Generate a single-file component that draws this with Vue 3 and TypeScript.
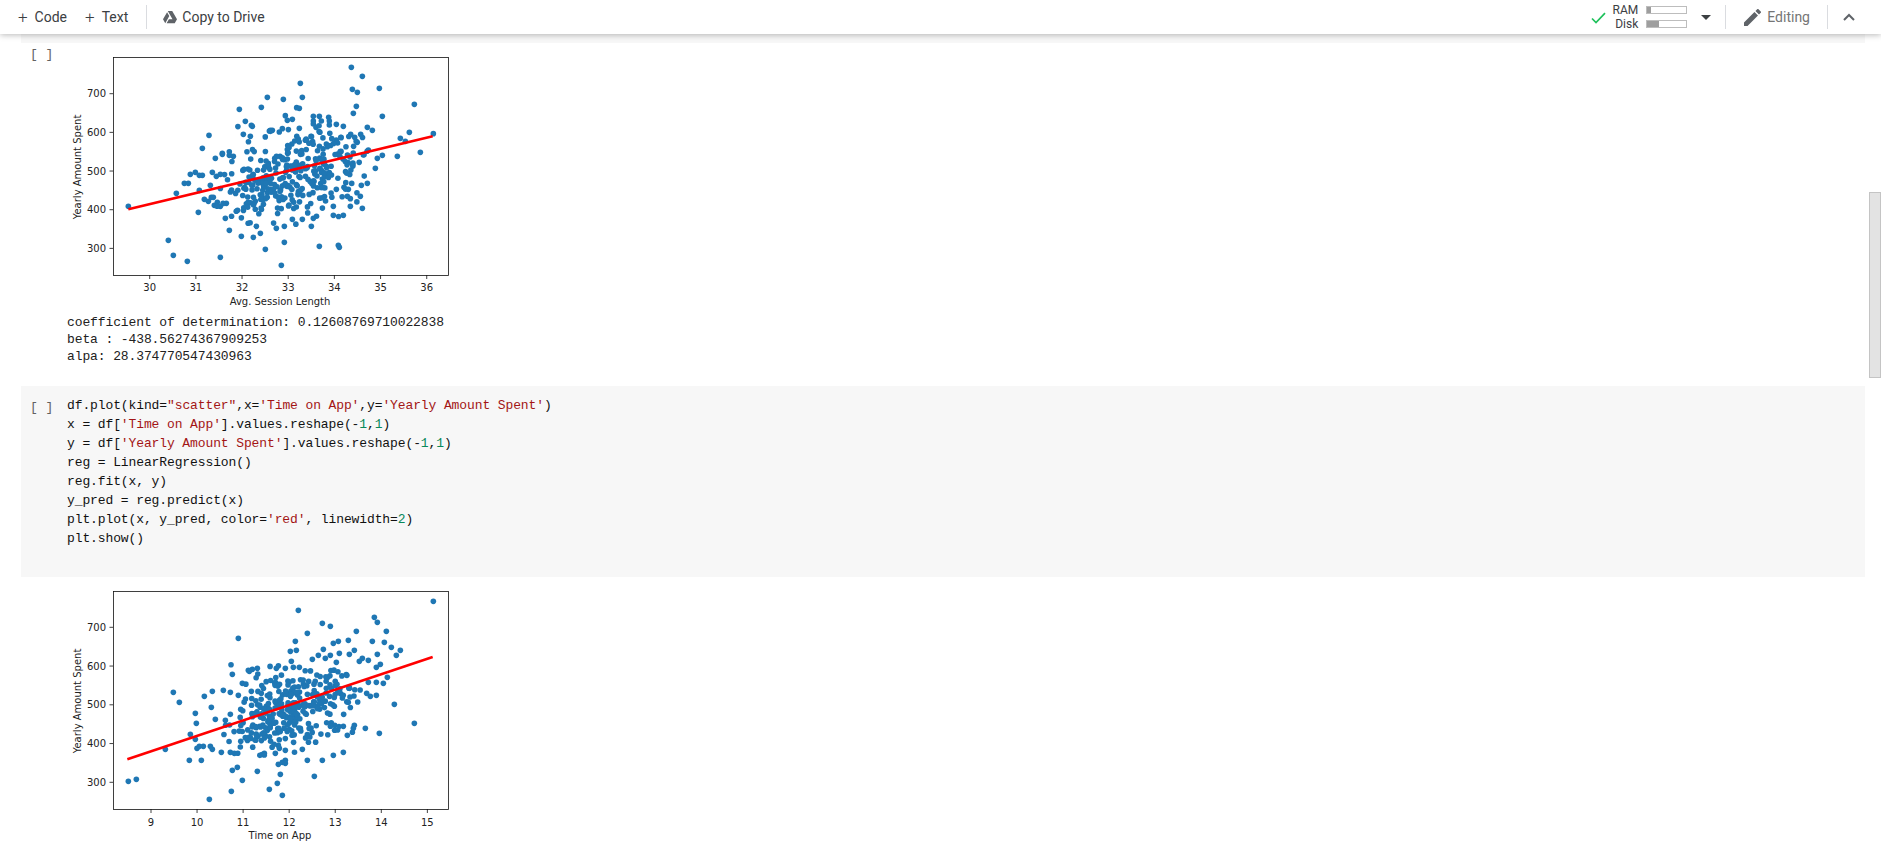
<script setup lang="ts">
type Point = [number, number];

interface Plot {
  xLabel: string;
  xLabelY: number;
  yLabelY: number;
  tickLabelY: number;
  box: [number, number, number, number];
  xTicks: { at: number; label: string }[];
  yTicks: { at: number; label: string }[];
  line: [number, number, number, number];
  points: Point[];
  top: number;
  height: number;
}

// seeded so the dense middle of each cloud stays the same between runs
const scatterFill = (seed: number, count: number, cx: number, cy: number, sx: number, sy: number, slope: number): Point[] => {
  let s = seed;
  const rand = () => {
    s = (s + 0x6d2b79f5) | 0;
    let t = Math.imul(s ^ (s >>> 15), 1 | s);
    t = (t + Math.imul(t ^ (t >>> 7), 61 | t)) ^ t;
    return ((t ^ (t >>> 14)) >>> 0) / 4294967296;
  };
  const gauss = () => Math.sqrt(-2 * Math.log(rand() + 1e-9)) * Math.cos(2 * Math.PI * rand());
  const out: Point[] = [];
  while (out.length < count) {
    const dx = gauss() * sx;
    const dy = gauss() * sy - dx * slope;
    if (Math.abs(dx) < sx * 2 && Math.abs(dy) < sy * 2.2) out.push([cx + dx, cy + dy]);
  }
  return out;
};

const session: Point[] = [
  [904,82],[937,109],[907,148],[922,157],[751,130],[988,145],[652,172],[700,178],[757,172],[919,199],[634,202],[568,208],
  [740,203],[748,205],[910,220],[706,227],[712,241],[727,238],[790,229],[808,229],[836,232],[838,243],[838,255],[790,243],
  [790,252],[798,262],[814,243],[586,244],[604,256],[607,259],[748,265],[697,266],[661,271],[667,271],[880,259],[859,253],
  [952,262],[967,271],[997,229],[1093,193],[1078,277],[1150,281],[1051,295],[1066,304],[1111,337],[1042,349],[997,346],
  [982,355],[976,385],[477,286],[457,325],[496,355],[517,340],[517,343],[538,346],[550,349],[235,499],[379,460],[421,403],
  [436,397],[448,406],[457,406],[403,430],[415,430],[487,397],[499,409],[511,403],[481,436],[448,451],[463,478],[475,484],
  [484,472],[490,472],[493,496],[502,487],[511,499],[529,490],[445,517],[526,535],[538,571],[574,589],[610,592],[631,580],
  [619,559],[646,628],[703,607],[694,676],[703,559],[679,565],[355,601],[370,646],[412,664],[511,652],[808,619],[865,616],
  [868,622],[757,538],[727,538],[784,559],[790,535],[880,526],[850,526],[850,499],[901,499],[937,505],[952,430],[934,436],
  [931,469],[901,476],[892,469],[895,448],[859,448],[902,283],[914,292],[932,283],[955,330],[940,345],[580,283],[601,289],
];

const timeOnApp: Point[] = [
  [1150,64],[745,91],[973,112],[982,127],[817,130],[841,139],[565,175],[772,160],[919,154],[1009,154],[736,184],[850,190],
  [865,184],[895,181],[967,184],[1003,187],[1024,202],[1051,211],[1039,226],[721,214],[739,211],[820,208],[805,226],[841,226],
  [868,220],[898,223],[913,211],[982,223],[826,235],[937,235],[928,244],[955,241],[787,238],[724,244],[730,262],[748,262],
  [859,247],[991,253],[979,262],[622,265],[607,268],[595,271],[598,274],[679,265],[706,265],[547,283],[1012,292],[979,307],
  [1000,310],[955,307],[577,310],[520,331],[487,334],[604,334],[541,337],[370,337],[388,367],[463,349],[565,346],[950,340],
  [961,349],[979,346],[1033,373],[1093,430],[988,460],[946,445],[913,436],[910,445],[880,439],[892,466],[421,463],[436,400],
  [439,430],[484,382],[496,418],[436,478],[441,505],[448,499],[460,499],[481,499],[487,508],[346,508],[514,517],[541,517],
  [553,520],[418,541],[454,541],[547,571],[562,562],[622,574],[577,601],[544,634],[658,628],[682,610],[691,583],[478,658],
  [697,646],[793,589],[772,541],[817,541],[850,526],[880,517],[757,508],[235,604],[259,598],[685,553],[697,547],[706,541],
  [706,550],[706,511],[688,505],[643,520],[676,520],
];

const ticks = (start: number, step: number, labels: (string | number)[]) =>
  labels.map((label, i) => ({ at: start + step * i, label: String(label) }));

const plots: Plot[] = [
  {
    xLabel: 'Avg. Session Length',
    xLabelY: 261,
    yLabelY: 127,
    tickLabelY: 247,
    box: [63, 17, 398, 235],
    xTicks: ticks(99.7, 46.17, [30, 31, 32, 33, 34, 35, 36]),
    yTicks: ticks(53.7, 38.67, [700, 600, 500, 400, 300]),
    line: [235, 508, 1148, 289],
    points: [...session, ...scatterFill(11, 320, 725, 405, 115, 68, 0.3)],
    top: 3,
    height: 271,
  },
  {
    xLabel: 'Time on App',
    xLabelY: 255,
    yLabelY: 121,
    tickLabelY: 242,
    box: [63, 11, 398, 229],
    xTicks: ticks(101, 46.06, [9, 10, 11, 12, 13, 14, 15]),
    yTicks: ticks(47.3, 38.75, [700, 600, 500, 400, 300]),
    line: [232, 538, 1148, 231],
    points: [...timeOnApp, ...scatterFill(29, 320, 730, 390, 105, 62, 0.38)],
    top: 0,
    height: 283,
  },
];

const outputLines = [
  'coefficient of determination: 0.12608769710022838',
  'beta : -438.56274367909253',
  'alpa: 28.374770547430963',
];

type Token = [string, '' | 's' | 'n'];

const codeLines: Token[][] = [
  [['df.plot(kind=', ''], ['"scatter"', 's'], [',x=', ''], ["'Time on App'", 's'], [',y=', ''], ["'Yearly Amount Spent'", 's'], [')', '']],
  [['x = df[', ''], ["'Time on App'", 's'], ['].values.reshape(-', ''], ['1', 'n'], [',', ''], ['1', 'n'], [')', '']],
  [['y = df[', ''], ["'Yearly Amount Spent'", 's'], ['].values.reshape(-', ''], ['1', 'n'], [',', ''], ['1', 'n'], [')', '']],
  [['reg = LinearRegression()', '']],
  [['reg.fit(x, y)', '']],
  [['y_pred = reg.predict(x)', '']],
  [['plt.plot(x, y_pred, color=', ''], ["'red'", 's'], [', linewidth=', ''], ['2', 'n'], [')', '']],
  [['plt.show()', '']],
];

const meters = [
  { name: 'RAM', used: 9 },
  { name: 'Disk', used: 31 },
];
</script>

<template>
  <div class="page">
    <header class="toolbar">
      <div class="group">
        <button class="tool"><span class="plus">+</span>Code</button>
        <button class="tool"><span class="plus">+</span>Text</button>
        <span class="sep first-sep"></span>
        <button class="tool drive">
          <svg width="14" height="13" viewBox="0 0 24 22">
            <path fill="#5f6368" d="M8.2 0h7.6l8.2 14h-7.7L8.2 0zM7 2l3.8 6.6L3.9 21 0 14.2 7 2zM6.2 21l3.9-7H24l-3.9 7H6.2z" />
          </svg>
          Copy to Drive
        </button>
      </div>
      <div class="group">
        <svg class="check" width="15" height="12" viewBox="0 0 15 12">
          <path d="M1 6.5l4 4L14 1.2" fill="none" stroke="#1fc15c" stroke-width="1.7" />
        </svg>
        <div class="meters">
          <div v-for="m in meters" :key="m.name" class="meter">
            <span class="meter-name">{{ m.name }}</span>
            <span class="meter-bar"><span class="meter-fill" :style="{ width: m.used + '%' }"></span></span>
          </div>
        </div>
        <span class="caret"></span>
        <span class="sep"></span>
        <svg class="pencil" width="17" height="17" viewBox="3 3 18 18">
          <path fill="#5f6368" d="M3 17.25V21h3.75L17.81 9.94l-3.75-3.75L3 17.25zM20.71 7.04a1 1 0 0 0 0-1.41l-2.34-2.34a1 1 0 0 0-1.41 0l-1.83 1.83 3.75 3.75 1.83-1.83z" />
        </svg>
        <span class="editing">Editing</span>
        <span class="sep"></span>
        <svg class="chevron" width="12" height="8" viewBox="0 0 12 8">
          <path d="M1 7l5-5 5 5" fill="none" stroke="#5f6368" stroke-width="2" />
        </svg>
      </div>
    </header>

    <main class="notebook">
      <div class="strip"></div>

      <section class="cell">
        <span class="run">[ ]</span>
        <div class="cell-output">
          <svg class="plot" width="420" :height="plots[0].height" :viewBox="`0 ${plots[0].top} 420 ${plots[0].height}`">
            <circle v-for="(p, i) in plots[0].points" :key="i" :cx="p[0] / 3" :cy="p[1] / 3" r="2.8" fill="#1f77b4" />
            <line :x1="plots[0].line[0] / 3" :y1="plots[0].line[1] / 3" :x2="plots[0].line[2] / 3" :y2="plots[0].line[3] / 3" stroke="#f00" stroke-width="2.6" />
            <rect :x="plots[0].box[0] + 0.5" :y="plots[0].box[1] + 0.5" :width="plots[0].box[2] - plots[0].box[0]" :height="plots[0].box[3] - plots[0].box[1]" fill="none" stroke="#111" stroke-width="0.8" />
            <g v-for="t in plots[0].xTicks" :key="t.label">
              <line :x1="t.at" :x2="t.at" :y1="plots[0].box[3]" :y2="plots[0].box[3] + 4" stroke="#111" stroke-width="0.8" />
              <text :x="t.at" :y="plots[0].tickLabelY + 3.5" text-anchor="middle">{{ t.label }}</text>
            </g>
            <g v-for="t in plots[0].yTicks" :key="t.label">
              <line :x1="plots[0].box[0]" :x2="plots[0].box[0] - 3.5" :y1="t.at" :y2="t.at" stroke="#111" stroke-width="0.8" />
              <text x="56" :y="t.at + 3.5" text-anchor="end">{{ t.label }}</text>
            </g>
            <text x="230" :y="plots[0].xLabelY + 3.5" text-anchor="middle">{{ plots[0].xLabel }}</text>
            <text text-anchor="middle" :transform="`translate(30.5 ${plots[0].yLabelY}) rotate(-90)`">Yearly Amount Spent</text>
          </svg>
          <pre class="stdout"><template v-for="l in outputLines" :key="l">{{ l + '\n' }}</template></pre>
        </div>
      </section>

      <section class="cell code-cell">
        <span class="run">[ ]</span>
        <div class="code">
          <div v-for="(line, i) in codeLines" :key="i" class="code-line">
            <span v-for="(t, j) in line" :key="j" :class="t[1]">{{ t[0] }}</span>
          </div>
        </div>
      </section>

      <section class="cell">
        <span class="run"></span>
        <div class="cell-output">
          <svg class="plot plot-two" width="420" :height="plots[1].height" :viewBox="`0 ${plots[1].top} 420 ${plots[1].height}`">
            <circle v-for="(p, i) in plots[1].points" :key="i" :cx="p[0] / 3" :cy="p[1] / 3" r="2.8" fill="#1f77b4" />
            <line :x1="plots[1].line[0] / 3" :y1="plots[1].line[1] / 3" :x2="plots[1].line[2] / 3" :y2="plots[1].line[3] / 3" stroke="#f00" stroke-width="2.6" />
            <rect :x="plots[1].box[0] + 0.5" :y="plots[1].box[1] + 0.5" :width="plots[1].box[2] - plots[1].box[0]" :height="plots[1].box[3] - plots[1].box[1]" fill="none" stroke="#111" stroke-width="0.8" />
            <g v-for="t in plots[1].xTicks" :key="t.label">
              <line :x1="t.at" :x2="t.at" :y1="plots[1].box[3]" :y2="plots[1].box[3] + 4" stroke="#111" stroke-width="0.8" />
              <text :x="t.at" :y="plots[1].tickLabelY + 3.5" text-anchor="middle">{{ t.label }}</text>
            </g>
            <g v-for="t in plots[1].yTicks" :key="t.label">
              <line :x1="plots[1].box[0]" :x2="plots[1].box[0] - 3.5" :y1="t.at" :y2="t.at" stroke="#111" stroke-width="0.8" />
              <text x="56" :y="t.at + 3.5" text-anchor="end">{{ t.label }}</text>
            </g>
            <text x="230" :y="plots[1].xLabelY + 3.5" text-anchor="middle">{{ plots[1].xLabel }}</text>
            <text text-anchor="middle" :transform="`translate(30.5 ${plots[1].yLabelY}) rotate(-90)`">Yearly Amount Spent</text>
          </svg>
        </div>
      </section>

      <div class="scrollbar"></div>
    </main>
  </div>
</template>

<style>
html,
body {
  margin: 0;
  background: #fff;
  overflow: hidden;
}
</style>

<style scoped>
.page {
  height: 863px;
  overflow: hidden;
  font-family: Roboto, sans-serif;
  color: #3c4043;
}

.toolbar {
  height: 34px;
  display: flex;
  align-items: center;
  justify-content: space-between;
  background: #fff;
  box-shadow: 0 1px 6px rgba(0, 0, 0, 0.28);
  position: relative;
  z-index: 1;
}

.group {
  display: flex;
  align-items: center;
  height: 100%;
}

.tool {
  border: 0;
  background: none;
  padding: 0;
  font: 14px Roboto, sans-serif;
  color: #3c4043;
  display: flex;
  align-items: center;
}

.tool:first-child {
  margin-left: 18px;
  margin-right: 18px;
}

.plus {
  font-size: 17px;
  font-weight: 300;
  margin-right: 7px;
}

.sep {
  width: 1px;
  height: 24px;
  background: #dadce0;
}

.first-sep {
  margin-left: 18px;
  margin-right: 16px;
}

.drive svg {
  margin-right: 5px;
}

.check {
  margin-right: 6px;
  margin-top: 2px;
}

.meters {
  display: flex;
  flex-direction: column;
}

.meter {
  display: flex;
  align-items: center;
  height: 14px;
  font-size: 12px;
}

.meter-name {
  width: 26px;
  text-align: right;
  margin-right: 8px;
}

.meter-bar {
  width: 39px;
  height: 6px;
  border: 1px solid #bdbdbd;
  display: block;
}

.meter-fill {
  display: block;
  height: 100%;
  background: #9e9e9e;
}

.caret {
  width: 0;
  height: 0;
  margin: 0 14px;
  border-left: 5px solid transparent;
  border-right: 5px solid transparent;
  border-top: 5px solid #3c4043;
}

.pencil {
  margin-left: 18px;
  margin-right: 6px;
}

.editing {
  font-size: 14px;
  color: #757575;
  margin-right: 17px;
}

.chevron {
  margin-left: 15px;
  margin-right: 26px;
}

.notebook {
  position: relative;
  height: 829px;
  padding: 0 16px 0 21px;
}

.strip {
  height: 9px;
  background: #f7f7f7;
}

.cell {
  display: flex;
}

.run {
  flex: none;
  width: 37px;
  padding-left: 9px;
  margin-top: 2px;
  font: 13px/19px "Liberation Mono", monospace;
  letter-spacing: -0.11px;
  color: #616161;
  white-space: pre;
}

.cell-output {
  display: flex;
  flex-direction: column;
}

.plot {
  display: block;
  margin-left: -17px;
}

.plot text {
  font: 10px "DejaVu Sans", sans-serif;
  fill: #222;
}

.plot-two {
  margin-top: 3px;
}

.stdout {
  margin: 0 0 21px;
  font: 13px/17px "Liberation Mono", monospace;
  letter-spacing: -0.11px;
  color: #212121;
}

.code-cell {
  height: 191px;
  background: #f7f7f7;
  padding-top: 10px;
  box-sizing: border-box;
}

.code {
  font: 13px/19px "Liberation Mono", monospace;
  letter-spacing: -0.11px;
  color: #111;
}

.code-line {
  white-space: pre;
  height: 19px;
}

.s {
  color: #a31515;
}

.n {
  color: #09885a;
}

.scrollbar {
  position: absolute;
  right: 0;
  top: 158px;
  width: 10px;
  height: 184px;
  background: #e3e3e3;
  border: 1px solid #c4c4c4;
}
</style>
